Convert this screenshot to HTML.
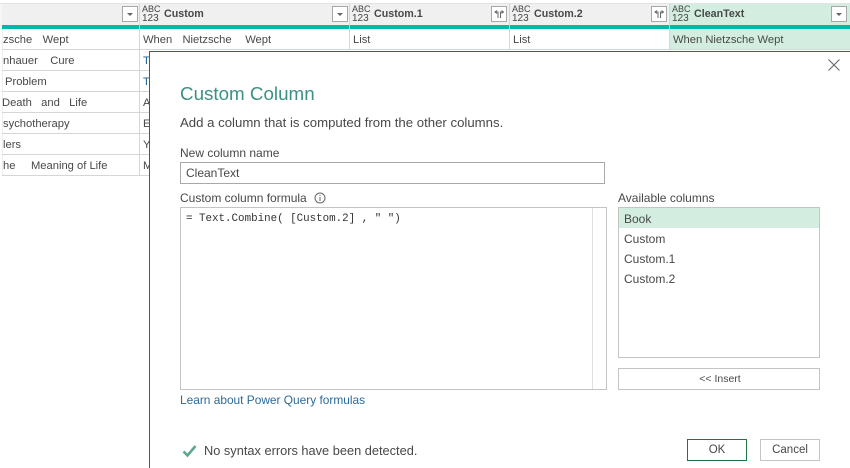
<!DOCTYPE html>
<html><head><meta charset="utf-8"><style>
*{box-sizing:border-box}
html,body{margin:0;padding:0}
body{width:850px;height:468px;overflow:hidden;background:#fff;position:relative;font-family:"Liberation Sans",sans-serif;color:#444}
.a{position:absolute}
.t{position:absolute;white-space:pre;font-size:11.2px;line-height:16px;color:#484848}
.l{position:absolute;white-space:pre;font-size:12px;line-height:16px;color:#484848}
.th{position:absolute;white-space:pre;font-size:10.7px;line-height:14px;font-weight:bold;color:#484848}
.ty{position:absolute;font-size:9px;line-height:9px;color:#444;width:20px}
.btn{position:absolute;width:16px;height:16px;border:1px solid #a8a8a8;background:#fff}
.arr{position:absolute;left:4px;top:6px;width:0;height:0;border-left:3px solid transparent;border-right:3px solid transparent;border-top:3px solid #666}
.ln{position:absolute;background:#d6d6d6}
.box{position:absolute;border:1px solid #c4c4c4;background:#fff}
</style></head><body>
<div class="a" style="left:0;top:3px;width:850px;height:1px;background:#e4e4e4"></div>
<div class="a" style="left:0;top:4px;width:2px;height:25px;background:#f6f6f6"></div>
<div class="a" style="left:2px;top:4px;width:667px;height:21px;background:#f0f0f0"></div>
<div class="a" style="left:669px;top:4px;width:181px;height:25px;background:#d3eee0"></div>
<div class="a" style="left:669px;top:29px;width:181px;height:21px;background:#d3eee0"></div>
<div class="a" style="left:2px;top:25px;width:848px;height:4px;background:#01b8aa"></div>
<div class="ln" style="left:139px;top:4px;width:1px;height:172px"></div>
<div class="ln" style="left:349px;top:4px;width:1px;height:46px"></div>
<div class="ln" style="left:509px;top:4px;width:1px;height:46px"></div>
<div class="ln" style="left:669px;top:4px;width:1px;height:46px"></div>
<div class="a" style="left:2px;top:29px;width:1px;height:147px;background:#eeeeee"></div>
<div class="ln" style="left:2px;top:49px;width:848px;height:1px"></div>
<div class="ln" style="left:2px;top:70px;width:148px;height:1px"></div>
<div class="ln" style="left:2px;top:91px;width:148px;height:1px"></div>
<div class="ln" style="left:2px;top:112px;width:148px;height:1px"></div>
<div class="ln" style="left:2px;top:133px;width:148px;height:1px"></div>
<div class="ln" style="left:2px;top:154px;width:148px;height:1px"></div>
<div class="ln" style="left:2px;top:175px;width:148px;height:1px"></div>

<div class="btn" style="left:122px;top:6px"><div class="arr"></div></div>
<div class="btn" style="left:332px;top:6px"><div class="arr"></div></div>
<div class="btn" style="left:491px;top:6px"><svg width="14" height="14" style="position:absolute;left:0;top:0"><path d="M6 11V5H3.500M5 3.500L3 5l2 1.500M8.500 11V5H11M9.500 3.500L11.500 5 9.500 6.500" fill="none" stroke="#666" stroke-width="1"/></svg></div>
<div class="btn" style="left:651px;top:6px"><svg width="14" height="14" style="position:absolute;left:0;top:0"><path d="M6 11V5H3.500M5 3.500L3 5l2 1.500M8.500 11V5H11M9.500 3.500L11.500 5 9.500 6.500" fill="none" stroke="#666" stroke-width="1"/></svg></div>
<div class="btn" style="left:831px;top:6px"><div class="arr"></div></div>

<div class="ty" style="left:142px;top:5px">ABC<br><span style="font-size:10px">123</span></div>
<div class="th" style="left:164px;top:7px">Custom</div>
<div class="ty" style="left:352px;top:5px">ABC<br><span style="font-size:10px">123</span></div>
<div class="th" style="left:374px;top:7px">Custom.1</div>
<div class="ty" style="left:512px;top:5px">ABC<br><span style="font-size:10px">123</span></div>
<div class="th" style="left:534px;top:7px">Custom.2</div>
<div class="ty" style="left:672px;top:5px">ABC<br><span style="font-size:10px">123</span></div>
<div class="th" style="left:694px;top:7px">CleanText</div>

<div class="t" style="left:3px;top:32px;word-spacing:-0.5px">zsche    Wept</div>
<div class="t" style="left:143px;top:32px;word-spacing:0.3px">When   Nietzsche    Wept</div>
<div class="t" style="left:353px;top:32px">List</div>
<div class="t" style="left:513px;top:32px">List</div>
<div class="t" style="left:673px;top:32px">When Nietzsche Wept</div>
<div class="t" style="left:3px;top:53px">nhauer    Cure</div>
<div class="t" style="left:143px;top:53px;color:#1f5f8b">T</div>
<div class="t" style="left:5px;top:74px">Problem</div>
<div class="t" style="left:143px;top:74px;color:#1f5f8b">T</div>
<div class="t" style="left:2px;top:95px">Death   and   Life</div>
<div class="t" style="left:143px;top:95px">A</div>
<div class="t" style="left:3px;top:116px">sychotherapy</div>
<div class="t" style="left:143px;top:116px">E</div>
<div class="t" style="left:3px;top:137px">lers</div>
<div class="t" style="left:143px;top:137px">Y</div>
<div class="t" style="left:3px;top:158px">he     Meaning of Life</div>
<div class="t" style="left:143px;top:158px">M</div>

<!-- dialog -->
<div class="a" style="left:149px;top:51px;width:701px;height:417px;background:#fff;border-left:1px solid #217346;border-top:1px solid #217346"></div>
<svg class="a" style="left:827px;top:58px" width="14" height="14"><path d="M1.500 1.500L12.500 12.500M12.500 1.500L1.500 12.500" stroke="#666" stroke-width="1.100" fill="none"/></svg>
<div class="a" style="left:180px;top:82px;font-size:18.8px;line-height:24px;color:#3a9184;white-space:pre">Custom Column</div>
<div class="a" style="left:180px;top:114px;font-size:13.2px;line-height:17px;color:#484848;white-space:pre">Add a column that is computed from the other columns.</div>
<div class="l" style="left:180px;top:145px">New column name</div>
<div class="box" style="left:180px;top:162px;width:425px;height:22px;border-color:#a9a9a9"></div>
<div class="l" style="left:186px;top:165px">CleanText</div>
<div class="l" style="left:180px;top:190px">Custom column formula</div>
<svg class="a" style="left:314px;top:192px" width="12" height="12"><circle cx="6" cy="6" r="5" fill="none" stroke="#666" stroke-width="1"/><path d="M6 5v4M6 3v1" stroke="#666" stroke-width="1"/></svg>
<div class="box" style="left:180px;top:207px;width:427px;height:183px"></div>
<div class="a" style="left:592px;top:208px;width:1px;height:181px;background:#e0e0e0"></div>
<div class="a" style="left:186px;top:212px;font-family:'Liberation Mono',monospace;font-size:10.85px;line-height:14px;color:#333;white-space:pre">= Text.Combine( [Custom.2] , " ")</div>
<div class="l" style="left:618px;top:190px">Available columns</div>
<div class="box" style="left:618px;top:207px;width:202px;height:151px"></div>
<div class="a" style="left:619px;top:208px;width:200px;height:20px;background:#d3eee0"></div>
<div class="l" style="left:624px;top:211px">Book</div>
<div class="l" style="left:624px;top:231px">Custom</div>
<div class="l" style="left:624px;top:251px">Custom.1</div>
<div class="l" style="left:624px;top:271px">Custom.2</div>
<div class="box" style="left:618px;top:368px;width:202px;height:22px"></div>
<div class="t" style="left:619px;top:371px;width:202px;text-align:center;font-size:10.5px">&lt;&lt; Insert</div>
<div class="l" style="left:180px;top:392px;font-size:11.9px;color:#2b6a9b">Learn about Power Query formulas</div>
<svg class="a" style="left:182px;top:444px" width="15" height="14"><path d="M1.500 7.500L5.500 11.500L13.500 2" fill="none" stroke="#5fa58f" stroke-width="2.600"/></svg>
<div class="a" style="left:204px;top:443px;font-size:12.8px;line-height:16px;color:#484848;white-space:pre">No syntax errors have been detected.</div>
<div class="a" style="left:687px;top:439px;width:60px;height:22px;border:1px solid #217346;text-align:center;font-size:11.5px;line-height:21px;color:#484848">OK</div>
<div class="a" style="left:760px;top:439px;width:60px;height:22px;border:1px solid #c4c4c4;text-align:center;font-size:11.5px;line-height:21px;color:#484848">Cancel</div>
</body></html>
